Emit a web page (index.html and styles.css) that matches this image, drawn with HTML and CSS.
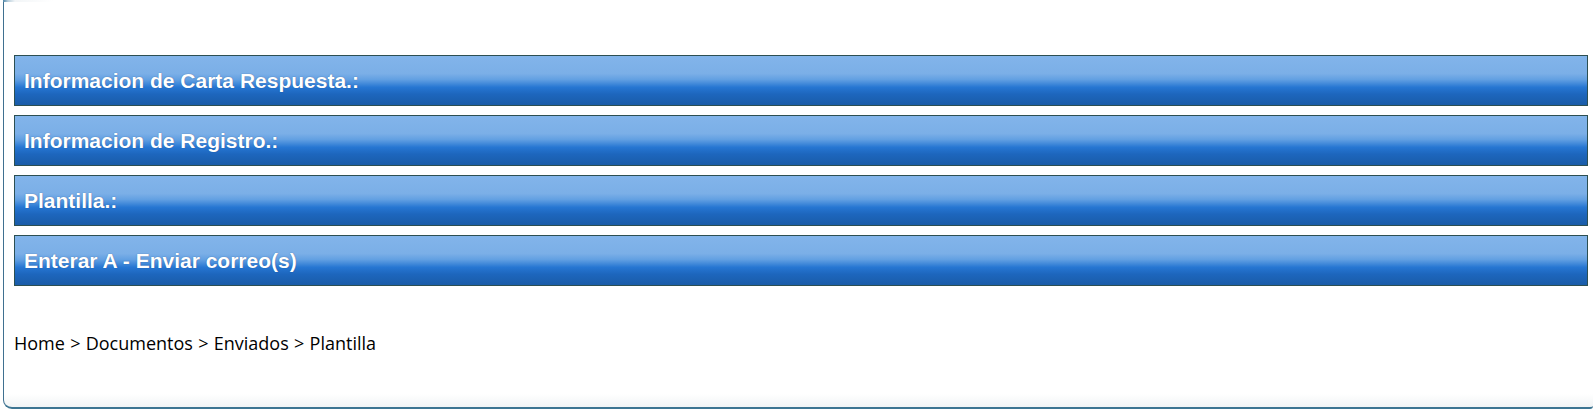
FILE: index.html
```html
<!DOCTYPE html>
<html lang="es">
<head>
<meta charset="utf-8">
<title>Plantilla</title>
<link rel="stylesheet" href="styles.css">
</head>
<body>
<div class="frame">
  <div class="frame-top"></div>
  <div class="panels">
    <div class="panel-head">Informacion de Carta Respuesta.:</div>
    <div class="panel-head">Informacion de Registro.:</div>
    <div class="panel-head">Plantilla.:</div>
    <div class="panel-head">Enterar A - Enviar correo(s)</div>
  </div>
  <div class="breadcrumb">Home &gt; Documentos &gt; Enviados &gt; Plantilla</div>
</div>
</body>
</html>
```

FILE: styles.css
```css
html, body {
  margin: 0;
  padding: 0;
  background: #ffffff;
}
body {
  width: 1595px;
  height: 410px;
  overflow: hidden;
}
.frame {
  position: relative;
  margin-left: 3px;
  width: 1590px;
  height: 409px;
  box-sizing: border-box;
  border-left: 1px solid #3f7090;
  border-bottom: 2px solid #3d7592;
  border-bottom-left-radius: 9px;
  border-bottom-right-radius: 3px;
  padding: 55px 5px 0 10px;
  background: linear-gradient(#ffffff 0, #ffffff 394px, #f1f4f5 407px);
}
.frame-top {
  position: absolute;
  left: -1px;
  top: 0;
  width: 50px;
  height: 2px;
  background: linear-gradient(90deg, #4f86a8 0, #b9cfdc 5px, #f2f5f7 12px, #ffffff 50px);
}
.panels {
  display: flex;
  flex-direction: column;
  gap: 9px;
}
.panel-head {
  height: 51px;
  box-sizing: border-box;
  border: 1px solid #2c4f52;
  background: linear-gradient(#82b4ea 0%, #7bafe7 36%, #62a0e2 48%, #2676d2 64%, #1d66bd 78%, #1a5ca8 100%);
  color: #ffffff;
  font-family: "Liberation Sans", Arial, sans-serif;
  font-weight: bold;
  font-size: 21px;
  line-height: 49px;
  padding-left: 9px;
  text-shadow: 0 0 1px rgba(20, 50, 110, 0.7);
  white-space: nowrap;
}
.breadcrumb {
  margin-top: 45px;
  font-family: "Open Sans", "Noto Sans", sans-serif;
  font-size: 18px;
  line-height: 24px;
  word-spacing: 0.6px;
  color: #000000;
}
```
